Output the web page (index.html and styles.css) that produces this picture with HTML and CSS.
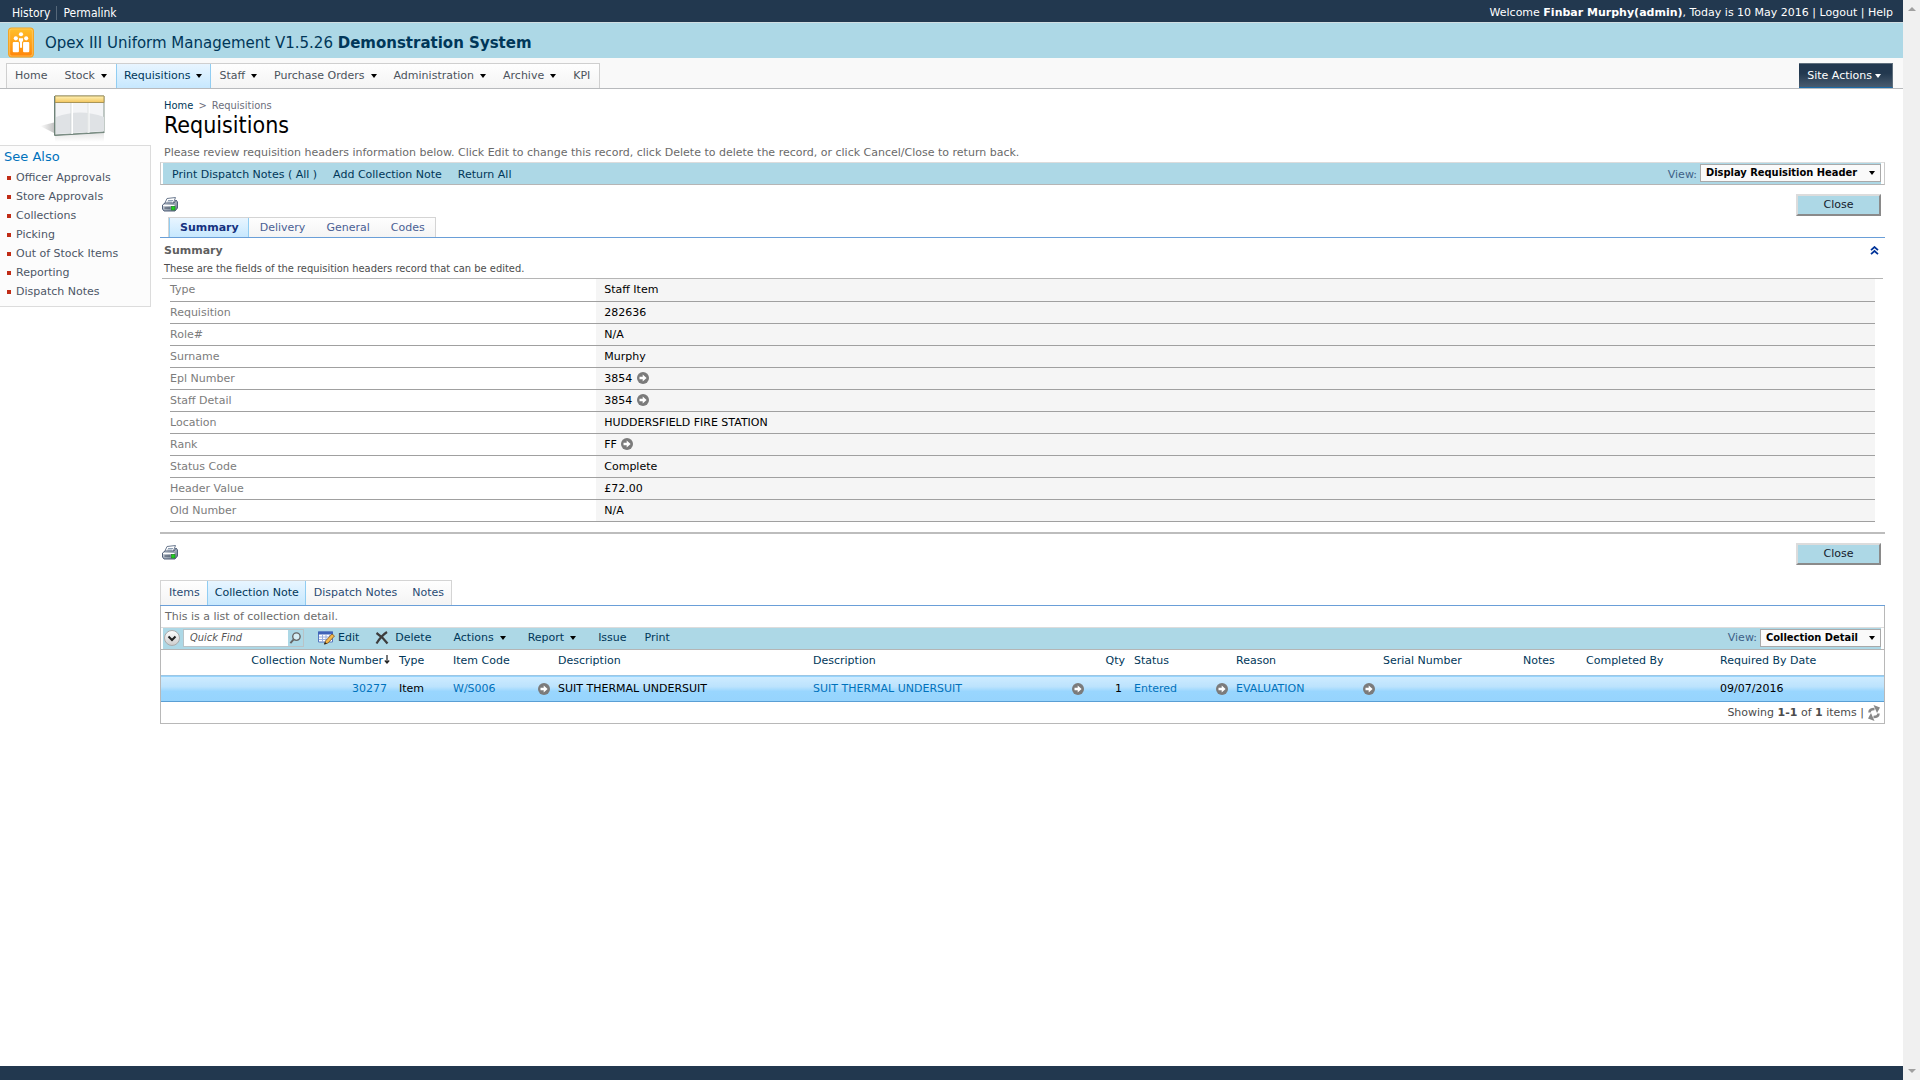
FILE: index.html
```html
<!DOCTYPE html>
<html lang="en">
<head>
<meta charset="utf-8">
<title>Requisitions</title>
<link rel="stylesheet" href="styles.css">
</head>
<body>
<svg class="defs" aria-hidden="true">
  <defs>
    <linearGradient id="orange" x1="0" y1="0" x2="0" y2="1"><stop offset="0" stop-color="#ffc02a"/><stop offset="1" stop-color="#ff8408"/></linearGradient>
    <linearGradient id="gold" x1="0" y1="0" x2="0" y2="1"><stop offset="0" stop-color="#fff3b8"/><stop offset="1" stop-color="#f2c45c"/></linearGradient>
    <linearGradient id="shade" x1="1" y1="0" x2="0" y2="0"><stop offset="0" stop-color="#bbb"/><stop offset="1" stop-color="#fff"/></linearGradient>
    <linearGradient id="steel" x1="0" y1="0" x2="1" y2="1"><stop offset="0" stop-color="#f4f7fa"/><stop offset="1" stop-color="#5b6b80"/></linearGradient>
    <linearGradient id="ball" x1="0" y1="0" x2="0" y2="1"><stop offset="0" stop-color="#fff"/><stop offset="1" stop-color="#ccc"/></linearGradient>
    <linearGradient id="fade" x1="0" y1="0" x2="0" y2="1"><stop offset="0" stop-color="#ccc"/><stop offset="1" stop-color="#fff"/></linearGradient>
    <symbol id="go" viewBox="0 0 12 12"><circle cx="6" cy="6" r="6" fill="#7b7b7b"/><path d="M2.5 4.8h3.2V2.4L9.6 6 5.7 9.6V7.2H2.500z" fill="#fff"/></symbol>
    <symbol id="printer" viewBox="0 0 16 15"><path d="M5 1.500 13.500.5 11 7H2.500z" fill="#fff" stroke="#6d7b90"/><path d="M6 3.500h5M5.300 5h5" stroke="#8fa0b5"/><path d="M.5 8 3 6h9l2-3 1.500 2v6L13 14H2L.5 12z" fill="url(#steel)" stroke="#52617a"/><path d="M1 8.500h11.500" stroke="#fff"/><path d="M2.500 11h6" stroke="#38465c"/><rect x="9.500" y="9.500" width="3.500" height="3.500" fill="#1ed01e" stroke="#118011" stroke-width=".5"/></symbol>
  </defs>
</svg>

<div class="page">
  <div class="topbar">
    <div class="toplinks"><a href="#">History</a><a href="#">Permalink</a></div>
    <div class="welcome">Welcome <b>Finbar Murphy(admin)</b>, Today is 10 May 2016 | <a href="#">Logout</a> | <a href="#">Help</a></div>
  </div>

  <header class="brand">
    <svg class="logo" viewBox="0 0 26 30"><rect x="1" y="1" width="24" height="28" rx="3" fill="url(#orange)" stroke="#f6a21c"/><rect x="2" y="2" width="22" height="26" rx="2" fill="none" stroke="#ffd27a" stroke-opacity=".6"/><g fill="#fff"><circle cx="8" cy="11" r="2"/><circle cx="13" cy="7" r="2"/><circle cx="18" cy="11" r="2"/><rect x="5" y="14.500" width="6" height="10" rx="1"/><rect x="15" y="14.500" width="6" height="10" rx="1"/><path d="M11 11h4v3h-1v6h-2v-6h-1z"/></g></svg>
    <span>Opex III Uniform Management V1.5.26 <b>Demonstration System</b></span>
  </header>

  <div class="menubar">
    <nav class="menu">
      <a href="#">Home</a><a href="#" class="drop">Stock</a><a href="#" class="drop current">Requisitions</a><a href="#" class="drop">Staff</a><a href="#" class="drop">Purchase Orders</a><a href="#" class="drop">Administration</a><a href="#" class="drop">Archive</a><a href="#">KPI</a>
    </nav>
    <button class="site-actions drop">Site Actions</button>
  </div>

  <div class="columns">
    <aside class="side">
      <svg class="grid-art" viewBox="0 0 66 50"><path d="M0 31 16 27v12z" fill="url(#shade)"/><path d="M15 41 64 38v9H15z" fill="url(#fade)" opacity=".5"/><path d="M15 1h49v36l-49 3z" fill="#f3f4f6" stroke="#85968e"/><path d="M16 22q24-9 48 0v14l-48 3z" fill="#dfe2e5"/><path d="M32 8v31M48.500 8v30" stroke="#fff" stroke-width="2"/><path d="M31 8v31M48 8v30" stroke="#c5cacb" stroke-width=".6"/><path d="M15 1h49v6.500H15z" fill="url(#gold)" stroke="#a99558"/><path d="M14.500 1v39.500l50-3" fill="none" stroke="#6f8379"/></svg>
      <section class="see-also">
        <h2>See Also</h2>
        <ul>
          <li><a href="#">Officer Approvals</a></li><li><a href="#">Store Approvals</a></li><li><a href="#">Collections</a></li><li><a href="#">Picking</a></li><li><a href="#">Out of Stock Items</a></li><li><a href="#">Reporting</a></li><li><a href="#">Dispatch Notes</a></li>
        </ul>
      </section>
    </aside>

    <main>
      <div class="crumbs"><a href="#">Home</a> <span class="sep">&gt;</span> Requisitions</div>
      <h1>Requisitions</h1>
      <p class="intro">Please review requisition headers information below. Click Edit to change this record, click Delete to delete the record, or click Cancel/Close to return back.</p>

      <div class="bar">
        <div class="bar-fill record-bar">
          <a href="#">Print Dispatch Notes ( All )</a><a href="#">Add Collection Note</a><a href="#">Return All</a>
          <label class="view" for="view1">View:</label>
          <span class="picker"><select id="view1" class="wide"><option>Display Requisition Header</option></select></span>
        </div>
      </div>

      <div class="action-row"><a href="#" aria-label="Print"><svg class="printer"><use href="#printer"/></svg></a><button class="close">Close</button></div>

      <div class="tabs form-tabs">
        <div class="tabset"><a href="#" class="current">Summary</a><a href="#">Delivery</a><a href="#">General</a><a href="#">Codes</a></div>
      </div>

      <div class="section-head"><h3>Summary</h3><svg class="chevrons" viewBox="0 0 9 9"><path d="M1 4.200 4.500 1 8 4.200M1 8.200 4.500 5 8 8.200" fill="none" stroke="#003399" stroke-width="1.700"/></svg></div>
      <p class="section-note">These are the fields of the requisition headers record that can be edited.</p>

      <div class="record">
        <table class="fields">
          <tr><th>Type</th><td>Staff Item</td></tr>
          <tr><th>Requisition</th><td>282636</td></tr>
          <tr><th>Role#</th><td>N/A</td></tr>
          <tr><th>Surname</th><td>Murphy</td></tr>
          <tr><th>Epl Number</th><td>3854 <svg class="go"><use href="#go"/></svg></td></tr>
          <tr><th>Staff Detail</th><td>3854 <svg class="go"><use href="#go"/></svg></td></tr>
          <tr><th>Location</th><td>HUDDERSFIELD FIRE STATION</td></tr>
          <tr><th>Rank</th><td>FF <svg class="go"><use href="#go"/></svg></td></tr>
          <tr><th>Status Code</th><td>Complete</td></tr>
          <tr><th>Header Value</th><td>£72.00</td></tr>
          <tr><th>Old Number</th><td>N/A</td></tr>
        </table>
      </div>

      <div class="action-row"><a href="#" aria-label="Print"><svg class="printer"><use href="#printer"/></svg></a><button class="close">Close</button></div>

      <div class="tabs list-tabs">
        <div class="tabset"><a href="#">Items</a><a href="#" class="current">Collection Note</a><a href="#">Dispatch Notes</a><a href="#">Notes</a></div>
      </div>

      <section class="list">
        <p class="list-note">This is a list of collection detail.</p>
        <div class="bar list-bar">
          <div class="bar-fill">
            <button class="expand" aria-label="Search options"><svg viewBox="0 0 16 16"><circle cx="8" cy="8" r="7.500" fill="url(#ball)" stroke="#aaa"/><path d="M4.500 6.500 8 10l3.500-3.500" fill="none" stroke="#222" stroke-width="2"/></svg></button>
            <div class="find"><input type="text" placeholder="Quick Find" aria-label="Quick Find"><button aria-label="Search"><svg viewBox="0 0 14 14"><circle cx="8" cy="5.500" r="4" fill="#d6eef5" stroke="#666" stroke-width="1.500"/><path d="M5 8.500 1.500 12.500" stroke="#666" stroke-width="2"/></svg></button></div>
            <a href="#" class="tool edit"><svg viewBox="0 0 17 15"><path d="M.5 1h14v10H.5z" fill="#fff" stroke="#5577c0"/><path d="M0 .5h15v3H0z" fill="#3f63b8"/><path d="M1 6h13M1 8.500h13M4.500 4v7M8 4v7M11.500 4v7" stroke="#9aaede"/><path d="m6.500 13 1-3L14 3l2.500 2L10 12z" fill="#f5b94a" stroke="#7d5522" stroke-width=".8"/><path d="m6 13.500 1-2.500 2 1.800z" fill="#222"/></svg>Edit</a>
            <a href="#" class="tool delete"><svg viewBox="0 0 14 14"><path d="M1.500 2q6 4 11 10.500M12 1Q6 5 1.500 12.500" fill="none" stroke="#3c3c3c" stroke-width="2.200"/></svg>Delete</a>
            <a href="#" class="tool drop">Actions</a><a href="#" class="tool drop">Report</a><a href="#" class="tool plain">Issue</a><a href="#" class="tool plain">Print</a>
            <label class="view" for="view2">View:</label>
            <span class="picker"><select id="view2"><option>Collection Detail</option></select></span>
          </div>
        </div>
        <table class="data">
          <colgroup><col class="c-num"><col class="c-type"><col class="c-code"><col class="c-desc"><col class="c-desc2"><col class="c-qty"><col class="c-status"><col class="c-reason"><col class="c-serial"><col class="c-notes"><col class="c-by"><col class="c-date"></colgroup>
          <thead><tr><th class="right">Collection Note Number<svg class="sort" viewBox="0 0 6 9"><path d="M3 0v8M.8 5.500 3 8l2.200-2.500" fill="none" stroke="#222" stroke-width="1.200"/></svg></th><th>Type</th><th>Item Code</th><th>Description</th><th>Description</th><th class="right">Qty</th><th>Status</th><th>Reason</th><th>Serial Number</th><th>Notes</th><th>Completed By</th><th>Required By Date</th></tr></thead>
          <tbody><tr><td class="right"><a href="#">30277</a></td><td>Item</td><td class="lookup"><a href="#">W/S006</a><svg class="go"><use href="#go"/></svg></td><td>SUIT THERMAL UNDERSUIT</td><td class="lookup"><a href="#">SUIT THERMAL UNDERSUIT</a><svg class="go"><use href="#go"/></svg></td><td class="right">1</td><td class="lookup"><a href="#">Entered</a><svg class="go"><use href="#go"/></svg></td><td class="lookup"><a href="#">EVALUATION</a><svg class="go"><use href="#go"/></svg></td><td></td><td></td><td></td><td>09/07/2016</td></tr></tbody>
        </table>
        <div class="pager"><span>Showing <b>1-1</b> of <b>1</b> items |</span><svg viewBox="0 0 12 16"><path d="M1.500 7.500Q1.500 4 6.500 4M10.500 8.500Q10.500 12 5.500 12" fill="none" stroke="#888" stroke-width="2.600"/><path d="M5.500 0 12 2.500 9 8zM6.500 16 0 13.500 3 8z" fill="#888"/></svg></div>
      </section>
    </main>
  </div>
  <footer class="footbar"></footer>
</div>
<div class="scrollbar"><i class="up"></i><i class="down"></i></div>
</body>
</html>
```

FILE: styles.css
```css
* { box-sizing: border-box; }
body {
  margin: 0;
  display: grid;
  grid-template-columns: minmax(0, 1fr) 17px;
  min-height: 100vh;
  background: #fff;
  color: #000;
  font: 11px/14px "DejaVu Sans", Verdana, sans-serif;
}
a { color: inherit; text-decoration: none; }
h1, h2, h3, p, ul { margin: 0; padding: 0; font-weight: normal; }
button, input, select { font: inherit; }
.defs { position: absolute; width: 0; height: 0; }
.page { display: flex; flex-direction: column; }

.scrollbar { display: flex; flex-direction: column; justify-content: space-between; align-items: center; padding: 7px 0; background: #f0f0f0; }
.scrollbar i { border: 4px solid transparent; }
.scrollbar .up { border-top-width: 0; border-bottom-color: #a0a0a0; }
.scrollbar .down { border-bottom-width: 0; border-top-color: #a0a0a0; }

.topbar { display: flex; justify-content: space-between; align-items: center; height: 22px; padding: 4px 10px 0 12px; background: #22384f; color: #fff; }
.toplinks { font: 12px/14px "DejaVu Sans Condensed", Tahoma, sans-serif; }
.toplinks a + a { margin-left: 6px; padding-left: 6px; border-left: 1px solid #56687a; }

.brand { display: flex; align-items: center; gap: 8px; height: 36px; padding: 4px 5px 0; border-top: 1px solid #d0dde2; background: #add8e6; color: #003759; font-size: 15px; line-height: 20px; }
.logo { width: 32px; height: 31px; }

.menubar { display: flex; justify-content: space-between; align-items: flex-end; height: 31px; padding: 0 10px 0 6px; border-bottom: 1px solid #b8babd; background: #f9f9f9; }
.menu { display: flex; height: 25px; border: solid #cfcfcf; border-width: 1px 1px 0; background: linear-gradient(#fefefe, #f4f4f4); color: #4c535c; }
.menu a { display: flex; align-items: center; padding: 0 8px 0 7px; border: solid transparent; border-width: 0 1px; }
.drop::after { content: ""; margin-left: 6px; border: 3px solid transparent; border-top: 4px solid #000; border-bottom: 0; }
.menu .current { border-color: #91cdf2; background: linear-gradient(#e8f5ff, #c7e8fe); color: #003759; }
.site-actions { display: flex; align-items: center; height: 25px; padding: 0 11px 0 8px; border: solid #5f6f7d; border-width: 1px 1px 1px 0; border-bottom-color: #1a6aa6; background: linear-gradient(#22384f 40%, #495b6e); color: #fff; }
.site-actions::after { margin-left: 3px; border-top-color: #fff; }

.columns { display: flex; align-items: flex-start; flex: 1; }
.side { flex: 0 0 151px; padding-top: 6px; }
.grid-art { display: block; width: 66px; height: 50px; margin-left: 40px; }
.see-also { padding: 3px 4px 5px; border: solid #dcdcdc; border-width: 1px 1px 1px 0; background: #fcfcfc; color: #4c5666; }
.see-also h2 { color: #0072bc; font-size: 13px; line-height: 16px; }
.see-also ul { margin-top: 3px; list-style: none; }
.see-also li { display: flex; align-items: center; gap: 5px; height: 19px; padding-left: 3px; }
.see-also li::before { content: ""; width: 4px; height: 4px; background: #c02c16; }

main { flex: 1; min-width: 0; padding: 10px 18px 40px 9px; }
.crumbs { padding-left: 4px; color: #6c6e7c; font: 11px/14px "DejaVu Sans Condensed", Tahoma, sans-serif; }
.crumbs a { color: #003759; }
.sep { margin: 0 2px; }
h1 { padding-left: 4px; font: 23px/24px "DejaVu Sans Condensed", Tahoma, sans-serif; }
.intro { padding: 9px 4px 2px; color: #6a6a6a; }

.bar { height: 23px; padding: 0 3px 0 2px; border: 1px solid #cacaca; border-bottom-color: #b5b5b5; border-top-color: #dcdcdc; background: #fff; }
.bar-fill { display: flex; align-items: center; height: 21px; background: #add8e6; color: #003759; }
.record-bar { padding-left: 9px; gap: 16px; }
.record-bar > a, .record-bar > label { padding-top: 2px; }
.view { margin-left: auto; color: #3d6187; }
.picker { position: relative; display: flex; margin-left: 3px; align-self: flex-start; margin-top: 1px; }
.record-bar .picker { margin-left: -13px; }
.picker select { width: 121px; height: 18px; padding: 0 16px 0 5px; border: 1px solid #a9a9a9; border-radius: 0; background: #fafafa; color: #000; font: bold 11px/14px "DejaVu Sans Condensed", Tahoma, sans-serif; appearance: none; }
.picker .wide { width: 181px; }
.picker::after { content: ""; position: absolute; right: 6px; top: 7px; border: 3px solid transparent; border-top: 4px solid #000; border-bottom: 0; }

.action-row { display: flex; align-items: center; justify-content: space-between; height: 40px; padding: 0 4px 0 2px; }
.printer { display: block; width: 16px; height: 15px; margin-bottom: 2px; }
.close { width: 85px; height: 22px; padding: 0; border: 2px solid; border-color: #dcdcdc #8a8a8a #8a8a8a #dcdcdc; background: #add8e6; color: #14202c; }

.tabs { display: flex; border-bottom: 1px solid #6a9fd8; }
.tabset { display: flex; border: solid #d4d4d4; border-width: 1px 1px 0; background: linear-gradient(#fefefe, #f4f4f4); }
.tabs a { display: flex; align-items: center; border: solid transparent; border-width: 0 1px; }
.tabs .current { border-color: #91cdf2; background: linear-gradient(#e8f5ff, #c7e8fe); }
.form-tabs { margin-top: -8px; padding-left: 8px; color: #4a5f94; }
.form-tabs a { height: 19px; padding: 0 9px 0 10px; }
.form-tabs .current { color: #15317e; font-weight: bold; }
.list-tabs { margin-top: 6px; color: #2a4b73; }
.list-tabs a { height: 24px; padding: 0 6px 0 7px; }
.list-tabs .current { color: #003759; }

.section-head { display: flex; align-items: center; justify-content: space-between; height: 25px; padding: 0 6px 0 4px; color: #5f5f5f; }
.section-head h3 { font-size: 11px; line-height: 14px; font-weight: bold; }
.chevrons { width: 9px; height: 9px; }
.section-note { height: 15px; padding-left: 4px; color: #4c4c4c; font: 11px/12px "DejaVu Sans Condensed", Tahoma, sans-serif; }
.record { padding: 0 10px 10px; border-bottom: 2px solid #bdbdbd; }
.record::before { content: ""; display: block; height: 1px; margin: 0 -8px; background: #b5b5b5; }
.fields { width: 100%; border-collapse: collapse; table-layout: fixed; }
.fields th, .fields td { height: 22px; padding: 1px 0 0; border-bottom: 1px solid #a0a0a0; text-align: left; font-weight: normal; }
.fields th { width: 25%; color: #7c7c7c; }
.fields td { padding-left: 8px; background: #f5f5f5; }
.go { width: 12px; height: 12px; vertical-align: -2px; }
.fields .go { margin-left: 1px; }

.list { border: solid #b8b8b8; border-width: 0 1px 1px; }
.list-note { height: 21px; padding: 4px 4px 0; color: #6a6a6a; line-height: 14px; }
.list-bar { border-width: 1px 0; }
.expand { width: 16px; height: 16px; margin: 0 3px 0 1px; padding: 0; border: 0; background: none; }
.expand svg, .find svg { display: block; width: 100%; height: 100%; }
.find { display: flex; width: 121px; height: 18px; margin-right: 14px; border: 1px solid #b9c3c7; background: #fff; }
.find input { flex: 1; min-width: 0; padding: 0 6px; border: 0; background: none; font: italic 11px/14px "DejaVu Sans Condensed", Tahoma, sans-serif; }
.find input::placeholder { color: #555; }
.find button { width: 15px; padding: 1px; border: 0; background: #add8e6; }
.tool { display: flex; align-items: center; margin-right: 22px; }
.tool.plain { margin-right: 18px; }
.tool svg { width: 17px; height: 15px; margin-right: 3px; }
.tool.edit { margin-right: 16px; }
.tool.delete svg { width: 14px; height: 14px; margin-right: 6px; }

.data { width: 100%; border-collapse: collapse; table-layout: fixed; }
.c-num { width: 232px; } .c-type { width: 54px; } .c-code { width: 105px; } .c-desc { width: 255px; }
.c-desc2 { width: 279px; } .c-qty { width: 42px; } .c-status { width: 102px; } .c-reason { width: 147px; }
.c-serial { width: 140px; } .c-notes { width: 63px; } .c-by { width: 134px; } .c-date { width: 170px; }
.data th, .data td { padding: 0 2px 0 6px; text-align: left; font-weight: normal; white-space: nowrap; }
.data th { height: 26px; padding-bottom: 2px; color: #003759; }
.data .right { padding: 0 6px 0 0; text-align: right; }
.data th.right { padding: 0 3px 2px 0; }
.data td { height: 26px; padding-top: 1px; }
.data tbody tr { border: solid #5a9fd4; border-width: 1px 0; border-top-color: #9cc6e4; background: linear-gradient(#cdebff, #bce3fd 40%, #99d6fe 60%, #96d4fd); }
.data td a { color: #0072bc; }
.lookup .go { float: right; margin-top: 1px; }
.sort { width: 6px; height: 9px; margin-left: 1px; }
.pager { display: flex; justify-content: flex-end; align-items: center; gap: 4px; height: 21px; padding-right: 4px; color: #4c4c4c; }
.pager svg { width: 12px; height: 16px; }
.footbar { height: 14px; background: #22384f; }
```
